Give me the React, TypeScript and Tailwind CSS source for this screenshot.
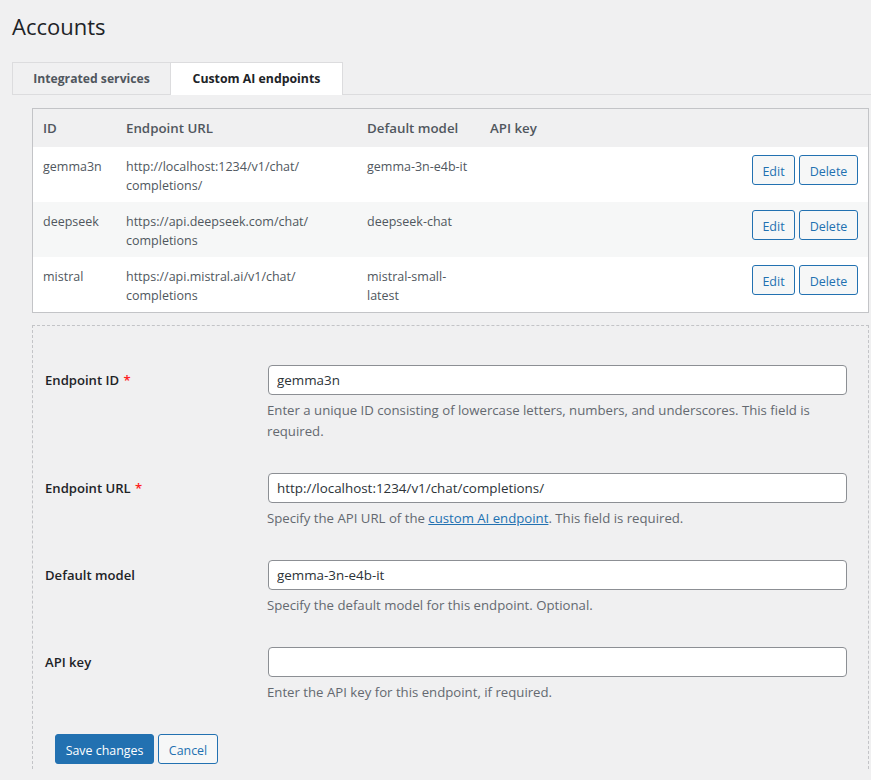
const endpoints = [
  { id: "gemma3n", url: ["http://localhost:1234/v1/chat/", "completions/"], model: ["gemma-3n-e4b-it"] },
  { id: "deepseek", url: ["https://api.deepseek.com/chat/", "completions"], model: ["deepseek-chat"] },
  { id: "mistral", url: ["https://api.mistral.ai/v1/chat/", "completions"], model: ["mistral-small-", "latest"] },
];

const fontClass = "font-['Open_Sans','Noto_Sans',sans-serif]";

const Field = ({
  label,
  required,
  value,
  className,
  children,
}: {
  label: string;
  required?: boolean;
  value: string;
  className: string;
  children: React.ReactNode;
}) => (
  <div className={`flex ${className}`}>
    <div className="w-[223px] pt-[6px] text-[13.1px] leading-[18px] font-semibold text-[#1d2327]">
      {label}
      {required && <span className="ml-px text-[#ff2020]"> *</span>}
    </div>
    <div className="w-[579px]">
      <input
        readOnly
        value={value}
        className="block w-full h-[30px] px-2 text-[13.4px] text-[#2c3338] bg-white border border-[#8c8f94] rounded-[4px] outline-none"
      />
      <p className="mt-[5px] -ml-px text-[13.2px] leading-[21px] text-[#646970]">{children}</p>
    </div>
  </div>
);

const App = () => {
  return (
    <div className={`w-[871px] h-[780px] overflow-hidden bg-[#f0f0f1] ${fontClass}`}>
      <h1 className="pl-3 pt-[9px] text-[22px] leading-[34px] text-[#1d2327]">Accounts</h1>

      <nav className="flex mt-[19px] ml-3 h-[33px] border-b border-[#dcdcde]">
        <div className="w-[159px] h-[33px] pt-px flex items-center justify-center text-[12.2px] font-bold text-[#50575e] bg-[#f0f0f1] border border-[#dcdcde]">
          Integrated services
        </div>
        <div className="w-[172px] h-[33px] flex items-center justify-center text-[12.3px] font-bold text-[#1d2327] bg-white border-t border-r border-[#dcdcde]">
          Custom AI endpoints
        </div>
      </nav>

      <div className="ml-8 mt-[13px] w-[837px] h-[205px] border border-[#c3c4c7] bg-white">
        <table className="w-full table-fixed border-collapse text-[12.5px] text-[#50575e]">
          <thead>
            <tr className="h-[38px] bg-[#f0f0f1] text-left text-[13.3px] text-[#50575e]">
              <th className="w-[83px] pl-[10px] pt-[2px] font-semibold">ID</th>
              <th className="w-[241px] pl-[10px] pt-[2px] font-semibold">Endpoint URL</th>
              <th className="w-[123px] pl-[10px] pt-[2px] font-semibold">Default model</th>
              <th className="pl-[10px] pt-[2px] font-semibold">API key</th>
              <th className="w-[130px]"></th>
            </tr>
          </thead>
          <tbody>
            {endpoints.map((row, i) => (
              <tr key={row.id} className={`h-[55px] ${i === 1 ? "bg-[#f6f7f7]" : "bg-white"}`}>
                <td className="pl-[10px] pt-[10px] align-top leading-[19px]">{row.id}</td>
                <td className="pl-[10px] pt-[10px] align-top leading-[19px]">
                  {row.url.map((line) => (
                    <div key={line}>{line}</div>
                  ))}
                </td>
                <td className="pl-[10px] pt-[10px] align-top leading-[19px]">
                  {row.model.map((line) => (
                    <div key={line}>{line}</div>
                  ))}
                </td>
                <td></td>
                <td className="align-top pt-2">
                  <div className="flex gap-1 justify-end pr-[10px]">
                    <button className="w-[43px] h-[30px] pt-[4px] text-[12.5px] text-[#2271b1] bg-[#f6f7f7] border border-[#2271b1] rounded-[3px]">
                      Edit
                    </button>
                    <button className="w-[59px] h-[30px] pt-[4px] text-[12.5px] text-[#2271b1] bg-[#f6f7f7] border border-[#2271b1] rounded-[3px]">
                      Delete
                    </button>
                  </div>
                </td>
              </tr>
            ))}
          </tbody>
        </table>
      </div>

      <div className="ml-8 mt-3 w-[837px] h-[444px] border-t border-l border-r border-dashed border-[#c3c4c7] pl-3 pt-[39px]">
        <Field label="Endpoint ID" required value="gemma3n" className="h-[108px]">
          Enter a unique ID consisting of lowercase letters, numbers, and underscores. This field is required.
        </Field>
        <Field label="Endpoint URL" required value="http://localhost:1234/v1/chat/completions/" className="h-[87px]">
          Specify the API URL of the{" "}
          <a className="text-[#2271b1] underline">custom AI endpoint</a>. This field is required.
        </Field>
        <Field label="Default model" value="gemma-3n-e4b-it" className="h-[87px]">
          Specify the default model for this endpoint. Optional.
        </Field>
        <Field label="API key" value="" className="h-[87px]">
          Enter the API key for this endpoint, if required.
        </Field>
        <div className="flex gap-1 ml-[10px]">
          <button className="w-[99px] h-[30px] pt-[4px] text-[12.4px] text-white bg-[#2271b1] border border-[#2271b1] rounded-[3px]">
            Save changes
          </button>
          <button className="w-[60px] h-[30px] pt-[4px] text-[12.4px] text-[#2271b1] bg-[#f6f7f7] border border-[#2271b1] rounded-[3px]">
            Cancel
          </button>
        </div>
      </div>
    </div>
  );
};

export default App;
